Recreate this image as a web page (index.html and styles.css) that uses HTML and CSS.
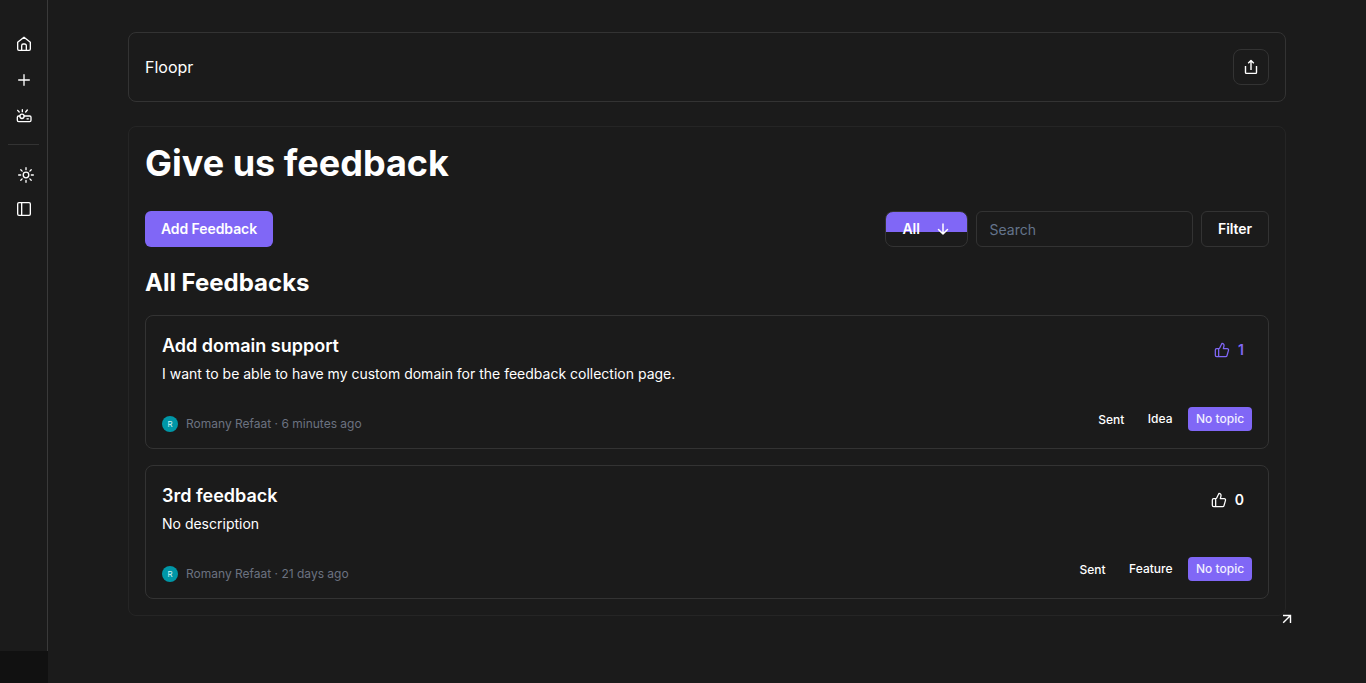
FILE: index.html
```html
<!DOCTYPE html>
<html lang="en">
<head>
<meta charset="utf-8">
<title>Floopr</title>
<link rel="stylesheet" href="styles.css">
</head>
<body>
<div class="app">
  <aside class="sidebar">
    <nav class="nav">
      <a class="nav-item"><svg class="icon" viewBox="0 0 24 24"><path d="M2.500 9.500 12 1.800l9.500 7.700V19.500a2 2 0 0 1-2 2h-15a2 2 0 0 1-2-2z"/><path d="M8.500 21V14.500a2.500 2.500 0 0 1 2.500-2.500h2a2.500 2.500 0 0 1 2.500 2.500v6.500"/></svg></a>
      <a class="nav-item"><svg class="icon" viewBox="0 0 24 24"><path d="M4 12h16M12 4v16"/></svg></a>
      <a class="nav-item"><svg class="icon" viewBox="0 0 24 24"><path d="M4.800 6 2.500 3.500M9.500 5.500V2.500M14.500 6l2.500-3"/><circle cx="9" cy="12.500" r="3.200"/><path d="M5.800 12H4a2 2 0 0 0-2 2V18.500a2 2 0 0 0 2 2h16.500a2 2 0 0 0 2-2v-4.500a2 2 0 0 0-2-2h-8.300M16.500 16.200h2"/></svg></a>
    </nav>
    <nav class="nav nav-tools">
      <a class="nav-item theme"><svg class="icon" viewBox="0 0 24 24"><circle cx="12" cy="12" r="4.200"/><path d="M12 1v3M12 20v3M1 12h3M20 12h3M4.200 4.200l2 2M17.800 17.800l2 2M4.200 19.800l2-2M17.800 6.200l2-2"/></svg></a>
      <a class="nav-item"><svg class="icon" viewBox="0 0 24 24"><rect x="2.500" y="2.500" width="19" height="19" rx="2"/><path d="M8.500 2.500v19"/></svg></a>
    </nav>
  </aside>
  <main class="main">
    <header class="topbar">
      <span class="brand">Floopr</span>
      <button class="share" aria-label="Share"><svg class="icon" viewBox="0 0 16 16"><path d="M2.500 7v6.500q0 .9.900.9h9.200q.9 0 .9-.9V7M8 11V2M5.200 4.300 8 1.500l2.800 2.800"/></svg></button>
    </header>
    <section class="panel">
      <h1 class="title">Give us feedback</h1>
      <div class="toolbar">
        <button class="btn btn-primary">Add Feedback</button>
        <div class="controls">
          <button class="btn sort"><span>All</span><svg class="icon" viewBox="0 0 16 16"><path d="M8 3v10M3.500 8.500 8 13l4.500-4.500"/></svg></button>
          <input class="search" type="text" placeholder="Search">
          <button class="btn btn-outline">Filter</button>
        </div>
      </div>
      <h2 class="subtitle">All Feedbacks</h2>
      <div class="list">
        <article class="card">
          <div class="card-row">
            <div>
              <h3 class="card-title">Add domain support</h3>
              <p class="card-text">I want to be able to have my custom domain for the feedback collection page.</p>
            </div>
            <div class="vote voted"><svg class="icon" viewBox="0 0 24 24"><path d="M7 10v12M15 5.880 14 10h5.830a2 2 0 0 1 1.920 2.560l-2.330 8A2 2 0 0 1 17.500 22H4a2 2 0 0 1-2-2v-8a2 2 0 0 1 2-2h2.760a2 2 0 0 0 1.790-1.110L12 2a3.130 3.130 0 0 1 3 3.880Z"/></svg><span>1</span></div>
          </div>
          <div class="card-row card-foot">
            <div class="author"><span class="avatar">R</span><span>Romany Refaat · 6 minutes ago</span></div>
            <div class="tags"><span class="tag status">Sent</span><span class="tag">Idea</span><span class="tag topic">No topic</span></div>
          </div>
        </article>
        <article class="card">
          <div class="card-row">
            <div>
              <h3 class="card-title">3rd feedback</h3>
              <p class="card-text">No description</p>
            </div>
            <div class="vote"><svg class="icon" viewBox="0 0 24 24"><path d="M7 10v12M15 5.880 14 10h5.830a2 2 0 0 1 1.920 2.560l-2.330 8A2 2 0 0 1 17.500 22H4a2 2 0 0 1-2-2v-8a2 2 0 0 1 2-2h2.760a2 2 0 0 0 1.790-1.110L12 2a3.130 3.130 0 0 1 3 3.880Z"/></svg><span>0</span></div>
          </div>
          <div class="card-row card-foot">
            <div class="author"><span class="avatar">R</span><span>Romany Refaat · 21 days ago</span></div>
            <div class="tags"><span class="tag status">Sent</span><span class="tag">Feature</span><span class="tag topic">No topic</span></div>
          </div>
        </article>
      </div>
      <svg class="expand" viewBox="0 0 10 10"><path d="M1 1.500h7.500V9M8.500 1.500 1.200 8.800"/></svg>
    </section>
  </main>
</div>
</body>
</html>
```
FILE: styles.css
```css
* { box-sizing: border-box; margin: 0; padding: 0; }
body {
  background: #111;
  color: #fff;
  font-family: Inter, "Liberation Sans", sans-serif;
  font-size: 14px;
  line-height: 20px;
  overflow: hidden;
}
.app { display: flex; align-items: flex-start; height: 683px; }
.icon {
  display: block;
  width: 16px;
  height: 16px;
  fill: none;
  stroke: currentColor;
  stroke-width: 2;
  stroke-linecap: round;
  stroke-linejoin: round;
}
.sidebar {
  width: 48px;
  height: 651px;
  padding: 26px 8px 0;
  background: #1b1b1b;
  border-right: 1px solid #3a3a3a;
}
.nav { display: flex; flex-direction: column; align-items: center; }
.nav-item { display: flex; align-items: center; justify-content: center; width: 32px; height: 36px; }
.nav-tools { margin-top: 10px; padding-top: 13px; border-top: 1px solid #333; }
.nav-tools .nav-item { height: 34px; }
.theme { padding-left: 4px; }
.main { flex: 1; height: 683px; padding: 32px 80px; background: #1b1b1b; }
.topbar {
  display: flex;
  align-items: center;
  justify-content: space-between;
  height: 70px;
  padding: 0 16px;
  border: 1px solid #333;
  border-radius: 8px;
}
.brand { font-size: 16px; line-height: 24px; }
.share {
  display: flex;
  align-items: center;
  justify-content: center;
  width: 36px;
  height: 36px;
  color: #fff;
  background: none;
  border: 1px solid #333;
  border-radius: 8px;
}
.share .icon { stroke-width: 1.4; stroke-linecap: butt; }
.panel {
  position: relative;
  height: 490px;
  margin-top: 24px;
  padding: 16px;
  border: 1px solid #252525;
  border-radius: 8px;
}
.title { font-size: 36px; line-height: 40px; font-weight: 700; }
.toolbar { display: flex; justify-content: space-between; margin-top: 28px; }
.controls { display: flex; gap: 8px; }
.btn {
  height: 36px;
  padding: 0 16px;
  color: #fff;
  font: 600 14px/20px Inter, sans-serif;
  letter-spacing: -0.08px;
  white-space: nowrap;
  border: 0;
  border-radius: 6px;
}
.btn-primary { width: 128px; padding: 0; background: #8067f6; }
.btn-outline { width: 68px; padding: 0; background: none; border: 1px solid #333; }
.sort {
  display: flex;
  align-items: center;
  justify-content: space-between;
  width: 83px;
  padding-left: 16.5px;
  background: linear-gradient(#8067f6 20px, transparent 20px) no-repeat;
  border: 1px solid #333;
  border-radius: 8px;
}
.sort .icon { stroke-width: 1.5; }
.search {
  width: 217px;
  height: 36px;
  padding: 1px 12px 0 12.500px;
  color: #fff;
  font: 14px/20px Inter, sans-serif;
  background: none;
  border: 1px solid #333;
  border-radius: 6px;
}
.search::placeholder { color: #64748b; }
.subtitle { margin-top: 20px; font-size: 24px; line-height: 32px; font-weight: 700; }
.list { display: flex; flex-direction: column; gap: 16px; margin-top: 16px; }
.card {
  display: flex;
  flex-direction: column;
  justify-content: space-between;
  height: 134px;
  padding: 16px;
  border: 1px solid #333;
  border-radius: 8px;
}
.card-row { display: flex; justify-content: space-between; }
.card-title { font-size: 18px; line-height: 28px; font-weight: 600; }
.card-text { margin-top: 4px; line-height: 20px; }
.vote { display: flex; align-items: center; gap: 8px; height: 36px; padding-right: 8px; font-weight: 600; }
.vote .icon { stroke-width: 1.9; }
.voted { color: #8067f6; }
.card-foot { height: 25px; }
.author { display: flex; align-items: center; gap: 8px; height: 16px; margin-top: 9px; color: #6b7280; font-size: 12px; line-height: 16px; }
.avatar {
  width: 16px;
  height: 16px;
  border-radius: 50%;
  background: #0097a7;
  color: #d5f3f5;
  font-size: 8px;
  text-align: center;
}
.tags { display: flex; gap: 8px; }
.tag { height: 24px; padding: 4px 7.500px 4px 8px; font-size: 12px; line-height: 16px; font-weight: 500; border-radius: 4px; }
.status { padding-top: 5px; }
.topic { width: 64px; background: #8067f6; color: #f2efff; white-space: nowrap; }
.expand {
  position: absolute;
  right: -7px;
  bottom: -9px;
  width: 10px;
  height: 10px;
  fill: none;
  stroke: #fff;
  stroke-width: 1.4;
}
```
